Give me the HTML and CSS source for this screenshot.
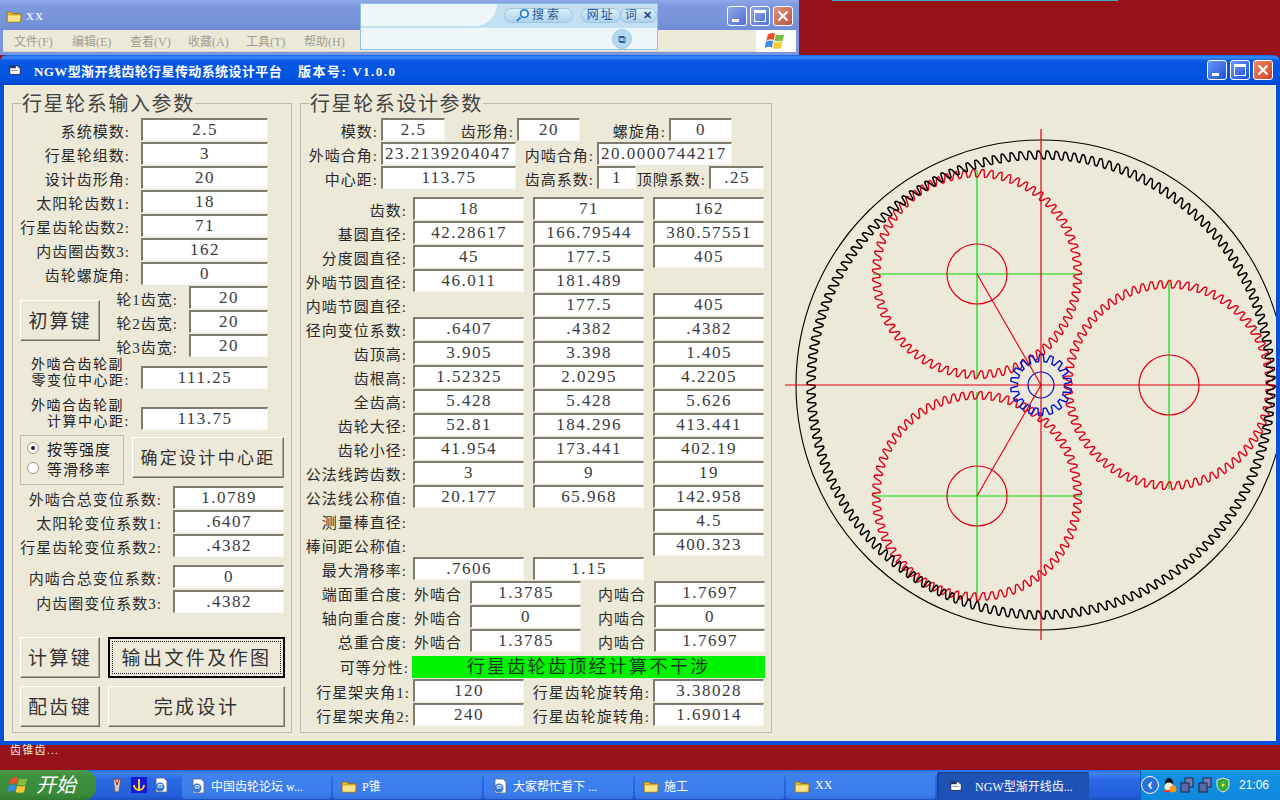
FILE: index.html
```html
<!DOCTYPE html>
<html lang="zh">
<head>
<meta charset="utf-8">
<title>NGW型渐开线齿轮行星传动系统设计平台</title>
<link rel="stylesheet" href="styles.css">
</head>
<body>
<svg class="defs" width="0" height="0">
  <symbol id="folder" viewBox="0 0 16 16"><path d="M1 4h5l1 1.500h8v8.500H1z" fill="#e8b830" stroke="#8a6a10" stroke-width=".8"/><path d="M1.500 7h13.500l-1 7H1.500z" fill="#fbe58a" stroke="#b08a20" stroke-width=".6"/></symbol>
  <symbol id="app" viewBox="0 0 16 16"><path d="M2 3h8l4 3v7H2z" fill="#fff" stroke="#223" stroke-width="1"/><rect x="2" y="3" width="7" height="3" fill="#2a3a70"/><rect x="4" y="8" width="7" height="1" fill="#889"/></symbol>
  <symbol id="ie" viewBox="0 0 16 16"><path d="M3 1h8l3 3v11H3z" fill="#fff" stroke="#667" stroke-width=".8"/><circle cx="7" cy="10" r="4.500" fill="#3a78d8"/><path d="M4.500 10h5M5 8.500a3 3 0 0 1 4.500 0" stroke="#fff" stroke-width="1.200" fill="none"/></symbol>
  <symbol id="flag" viewBox="0 0 24 24"><path d="M3 5q4-3 8-1l-1.500 7q-4-2-8 1z" fill="#e8502a"/><path d="M12 4.500q4 2 9 0l-1.500 7q-5 2-9 0z" fill="#7cc040"/><path d="M1 13q4-2.500 8-1l-1.500 7q-4-2-8 1z" fill="#3a8ae8"/><path d="M10 12.500q4 2 9 0l-1.500 7q-5 2-9 0z" fill="#f8c830"/></symbol>
</svg>

<div class="top">
  <div class="bgwin">
    <div class="bgtitle">
      <svg class="ico16"><use href="#folder"/></svg>
      <span class="bgname">XX</span>
      <div class="caps">
        <span class="cap in"><i class="min"></i></span>
        <span class="cap in"><i class="max"></i></span>
        <span class="cap inx"><svg viewBox="0 0 20 20"><path d="M5 5l10 10M15 5L5 15" stroke="#fff" stroke-width="2.400"/></svg></span>
      </div>
    </div>
    <div class="bgmenu">
      <div class="menus"><span>文件(F)</span><span>编辑(E)</span><span>查看(V)</span><span>收藏(A)</span><span>工具(T)</span><span>帮助(H)</span></div>
      <div class="logo"><svg width="22" height="22"><use href="#flag"/></svg></div>
    </div>
    <div class="iebar">
      <div class="ierow">
        <div class="ietab"></div>
        <span class="pill"><svg class="mag" viewBox="0 0 16 16"><circle cx="10" cy="6" r="4" fill="#dff" stroke="#2a80d0" stroke-width="2"/><path d="M6 10l-4 4" stroke="#2a80d0" stroke-width="2"/></svg>搜索</span>
        <span class="pill p2">网址</span>
        <span class="pill p3">词<b>✕</b></span>
      </div>
      <div class="iebox"><span class="roundb">⧉</span></div>
    </div>
  </div>
  <div class="strip"></div>
</div>

<div class="mainwin">
  <div class="title">
    <svg class="ico14"><use href="#app"/></svg>
    <span class="tname">NGW型渐开线齿轮行星传动系统设计平台</span>
    <span class="tver">版本号: V1.0.0</span>
    <div class="caps main">
      <span class="cap ac"><i class="min"></i></span>
      <span class="cap ac"><i class="max"></i></span>
      <span class="cap acx"><svg viewBox="0 0 20 20"><path d="M5 5l10 10M15 5L5 15" stroke="#fff" stroke-width="2.400"/></svg></span>
    </div>
  </div>
  <div class="client">
    <fieldset class="grp gl">
      <legend>行星轮系输入参数</legend>
      <div class="row"><span class="lb w128">系统模数:</span><span class="bx w127">2.5</span></div>
      <div class="row"><span class="lb w128">行星轮组数:</span><span class="bx w127">3</span></div>
      <div class="row"><span class="lb w128">设计齿形角:</span><span class="bx w127">20</span></div>
      <div class="row"><span class="lb w128">太阳轮齿数1:</span><span class="bx w127">18</span></div>
      <div class="row"><span class="lb w128">行星齿轮齿数2:</span><span class="bx w127">71</span></div>
      <div class="row"><span class="lb w128">内齿圈齿数3:</span><span class="bx w127">162</span></div>
      <div class="row"><span class="lb w128">齿轮螺旋角:</span><span class="bx w127">0</span></div>
      <div class="split">
        <button class="btn b80 h41 first">初算键</button>
        <div>
          <div class="row"><span class="lb w89">轮1齿宽:</span><span class="bx w79">20</span></div>
          <div class="row"><span class="lb w89">轮2齿宽:</span><span class="bx w79">20</span></div>
          <div class="row"><span class="lb w89">轮3齿宽:</span><span class="bx w79">20</span></div>
        </div>
      </div>
      <div class="row two r31"><span class="lb2"><span class="line1">外啮合齿轮副</span><br>零变位中心距:</span><span class="bx w127">111.25</span></div>
      <div class="row two r41"><span class="lb2"><span class="line1">外啮合齿轮副</span><br>计算中心距:</span><span class="bx w127">113.75</span></div>
      <div class="choice">
        <div class="radios">
          <label class="rd"><i class="dot on"></i>按等强度</label>
          <label class="rd"><i class="dot"></i>等滑移率</label>
        </div>
        <button class="btn cd">确定设计中心距</button>
      </div>
      <div class="row"><span class="lb w160">外啮合总变位系数:</span><span class="bx w111">1.0789</span></div>
      <div class="row"><span class="lb w160">太阳轮变位系数1:</span><span class="bx w111">.6407</span></div>
      <div class="row"><span class="lb w160">行星齿轮变位系数2:</span><span class="bx w111">.4382</span></div>
      <div class="row mt7"><span class="lb w160">内啮合总变位系数:</span><span class="bx w111">0</span></div>
      <div class="row mt1"><span class="lb w160">内齿圈变位系数3:</span><span class="bx w111">.4382</span></div>
      <div class="btnrow mt23">
        <button class="btn b80 big">计算键</button>
        <button class="btn b177 big focus"><span>输出文件及作图</span></button>
      </div>
      <div class="btnrow mt8">
        <button class="btn b80 big">配齿键</button>
        <button class="btn b177 big">完成设计</button>
      </div>
    </fieldset>

    <fieldset class="grp gr">
      <legend>行星轮系设计参数</legend>
      <div class="row rr"><span class="lb w80">模数:</span><span class="bx w64">2.5</span><span class="lb w72">齿形角:</span><span class="bx w63">20</span><span class="lb w89r">螺旋角:</span><span class="bx w63">0</span></div>
      <div class="row rr"><span class="lb w80">外啮合角:</span><span class="bx w135 left">23.2139204047</span><span class="lb w81">内啮合角:</span><span class="bx w135 left">20.0000744217</span></div>
      <div class="row rr"><span class="lb w80">中心距:</span><span class="bx w135">113.75</span><span class="lb w81">齿高系数:</span><span class="bx w39">1</span><span class="lb w73">顶隙系数:</span><span class="bx w55">.25</span></div>
      <div class="table">
        <span class="lb">齿数:</span><span class="bx">18</span><span class="bx">71</span><span class="bx">162</span>
        <span class="lb">基圆直径:</span><span class="bx">42.28617</span><span class="bx">166.79544</span><span class="bx">380.57551</span>
        <span class="lb">分度圆直径:</span><span class="bx">45</span><span class="bx">177.5</span><span class="bx">405</span>
        <span class="lb">外啮节圆直径:</span><span class="bx">46.011</span><span class="bx">181.489</span><span class="none"></span>
        <span class="lb">内啮节圆直径:</span><span class="none"></span><span class="bx">177.5</span><span class="bx">405</span>
        <span class="lb">径向变位系数:</span><span class="bx">.6407</span><span class="bx">.4382</span><span class="bx">.4382</span>
        <span class="lb">齿顶高:</span><span class="bx">3.905</span><span class="bx">3.398</span><span class="bx">1.405</span>
        <span class="lb">齿根高:</span><span class="bx">1.52325</span><span class="bx">2.0295</span><span class="bx">4.2205</span>
        <span class="lb">全齿高:</span><span class="bx">5.428</span><span class="bx">5.428</span><span class="bx">5.626</span>
        <span class="lb">齿轮大径:</span><span class="bx">52.81</span><span class="bx">184.296</span><span class="bx">413.441</span>
        <span class="lb">齿轮小径:</span><span class="bx">41.954</span><span class="bx">173.441</span><span class="bx">402.19</span>
        <span class="lb">公法线跨齿数:</span><span class="bx">3</span><span class="bx">9</span><span class="bx">19</span>
        <span class="lb">公法线公称值:</span><span class="bx">20.177</span><span class="bx">65.968</span><span class="bx">142.958</span>
        <span class="lb">测量棒直径:</span><span class="none"></span><span class="none"></span><span class="bx">4.5</span>
        <span class="lb">棒间距公称值:</span><span class="none"></span><span class="none"></span><span class="bx">400.323</span>
        <span class="lb">最大滑移率:</span><span class="bx">.7606</span><span class="bx">1.15</span><span class="none"></span>
      </div>
      <div class="row rr"><span class="lb w109">端面重合度:</span><span class="lb w60">外啮合</span><span class="bx w111">1.3785</span><span class="lb w73m">内啮合</span><span class="bx w111">1.7697</span></div>
      <div class="row rr"><span class="lb w109">轴向重合度:</span><span class="lb w60">外啮合</span><span class="bx w111">0</span><span class="lb w73m">内啮合</span><span class="bx w111">0</span></div>
      <div class="row rr"><span class="lb w109">总重合度:</span><span class="lb w60">外啮合</span><span class="bx w111">1.3785</span><span class="lb w73m">内啮合</span><span class="bx w111">1.7697</span></div>
      <div class="greenrow"><span class="lb w111l">可等分性:</span><span class="green">行星齿轮齿顶经计算不干涉</span></div>
      <div class="row rr"><span class="lb w112">行星架夹角1:</span><span class="bx w111">120</span><span class="lb w129">行星齿轮旋转角:</span><span class="bx w111">3.38028</span></div>
      <div class="row rr"><span class="lb w112">行星架夹角2:</span><span class="bx w111">240</span><span class="lb w129">行星齿轮旋转角:</span><span class="bx w111">1.69014</span></div>
    </fieldset>

    <svg class="draw" viewBox="776 85 500 656" width="500" height="656">
      <circle cx="1041" cy="385" r="245" class="thin-k"/>
      <g class="gr-green">
        <path d="M873 274H1081M977 170V378M873 496H1081M977 392V600M1169 281V489"/>
      </g>
      <path id="p1" class="r"/>
      <path id="p2" class="r"/>
      <path id="p3" class="r"/>
      <path id="ring" class="k"/>
      <g class="thin-r">
        <circle cx="977" cy="274" r="30"/>
        <circle cx="977" cy="496" r="30"/>
        <circle cx="1169" cy="385" r="30"/>
      </g>
      <path id="sun" class="b"/>
      <circle cx="1041" cy="385" r="13" class="thin-b"/>
      <path class="thin-r" d="M1041 129V640M785 385H1275M1041 385L977 274M1041 385L977 496"/>
    </svg>
  </div>
</div>

<div class="desk"><span>齿锥齿...</span></div>

<div class="task">
  <div class="start"><svg width="22" height="22"><use href="#flag"/></svg><em>开始</em></div>
  <div class="quick">
    <svg viewBox="0 0 16 16" width="16" height="16"><path d="M4 2h8l-2 13H6z" fill="#c8c8d0" stroke="#556"/><path d="M6 2l2 6 2-6" stroke="#c03020" fill="none"/></svg>
    <svg viewBox="0 0 16 16" width="16" height="16"><rect width="16" height="16" fill="#1818d8"/><path d="M8 2v12M3 8a5 5 0 0 0 10 0" stroke="#f8d020" stroke-width="2" fill="none"/></svg>
    <svg viewBox="0 0 16 16" width="16" height="16"><use href="#ie"/></svg>
  </div>
  <div class="tbtn t149"><svg class="ico16"><use href="#ie"/></svg>中国齿轮论坛 w...</div>
  <div class="tbtn t149"><svg class="ico16"><use href="#folder"/></svg>P锥</div>
  <div class="tbtn t149"><svg class="ico16"><use href="#ie"/></svg>大家帮忙看下 ...</div>
  <div class="tbtn t149"><svg class="ico16"><use href="#folder"/></svg>施工</div>
  <div class="tbtn t149"><svg class="ico16"><use href="#folder"/></svg>XX</div>
  <div class="tbtn act"><svg class="ico14"><use href="#app"/></svg>NGW型渐开线齿...</div>
  <div class="tray">
    <span class="back">‹</span>
    <svg viewBox="0 0 16 16" width="16" height="16"><ellipse cx="8" cy="6" rx="4" ry="5" fill="#111"/><ellipse cx="8" cy="10" rx="4.500" ry="4.500" fill="#f8f0d8"/><path d="M3 14h10" stroke="#e84020" stroke-width="2"/><circle cx="12" cy="12" r="3.500" fill="#f89820"/></svg>
    <svg viewBox="0 0 16 16" width="16" height="16"><rect x="6" y="1" width="8" height="9" fill="#7080b8" stroke="#224"/><rect x="2" y="6" width="8" height="9" fill="#5868a8" stroke="#224"/></svg>
    <svg viewBox="0 0 16 16" width="16" height="16"><rect x="6" y="1" width="8" height="9" fill="#7080b8" stroke="#224"/><rect x="2" y="6" width="8" height="9" fill="#5868a8" stroke="#224"/></svg>
    <svg viewBox="0 0 16 16" width="16" height="16"><path d="M8 1l6 2v5q0 5-6 7-6-2-6-7V3z" fill="#38a838" stroke="#e8f0e0"/><path d="M9 4L6 9h2l-1 3 3-5H8z" fill="#f8e840"/></svg>
    <span class="clock">21:06</span>
  </div>
</div>
<script src="script.js"></script>
</body>
</html>
```
FILE: styles.css
```css
* { box-sizing: border-box; }
html, body { margin: 0; padding: 0; }
body {
  width: 1280px; height: 800px; overflow: hidden;
  display: flex; flex-direction: column;
  background: #98121a;
  font-family: "Liberation Serif", "Noto Sans CJK SC", serif;
  color: #222;
}
.defs { position: absolute; }
.ico16 { width: 16px; height: 16px; flex: none; }
.ico14 { width: 14px; height: 14px; flex: none; }

/* back window */
.top { height: 55px; display: flex; flex: none; align-items: flex-start; }
.bgwin { position: relative; width: 799px; height: 55px; background: #7b96dc; border-radius: 6px 6px 0 0; padding: 0 3px 3px; display: flex; flex-direction: column; }
.strip { width: 286px; height: 1px; margin-left: 33px; background: #45a8d0; }
.bgtitle { height: 30px; display: flex; align-items: center; background: linear-gradient(#8ea8e8, #7d98de 20%, #7692da 80%, #6e8ad4); margin: 0 -3px; padding: 2px 6px 0; }
.bgname { margin-left: 4px; color: #fff; font: bold 11px "Liberation Serif", serif; letter-spacing: 1px; opacity: .85; }
.caps { margin-left: auto; display: flex; gap: 3px; }
.caps.main { margin-right: 3px; }
.cap { width: 20px; height: 20px; border: 1px solid #fff; border-radius: 3px; position: relative; display: block; }
.cap svg { width: 18px; height: 18px; display: block; }
.cap.in { background: linear-gradient(135deg, #8fa8ea, #4f6fd0); }
.cap.inx { background: linear-gradient(135deg, #e09080, #b8563e); }
.cap.ac { background: linear-gradient(135deg, #6a98f8, #1f52d8); }
.cap.acx { background: linear-gradient(135deg, #ea8a66, #cf4424); }
.cap .min { position: absolute; left: 4px; bottom: 3px; width: 7px; height: 3px; background: #fff; }
.cap .max { position: absolute; left: 3px; top: 3px; width: 12px; height: 12px; border: 1px solid #fff; border-top-width: 3px; }
.bgmenu { height: 22px; display: flex; align-items: center; background: #ece9d8; border-bottom: 1px solid #d8d4c0; }
.menus { display: flex; gap: 0; padding-left: 11px; }
.menus span { width: 58px; color: #a09e94; font-size: 12px; white-space: nowrap; }
.logo { margin-left: auto; width: 40px; height: 22px; background: #fff; display: flex; align-items: center; justify-content: center; }

/* floating toolbar */
.iebar { position: absolute; left: 360px; top: 3px; width: 298px; height: 47px; background: #c2e0f2; border: 1px solid #8cc4e6; display: flex; flex-direction: column; }
.ierow { height: 22px; display: flex; align-items: center; }
.ietab { width: 138px; height: 22px; background: #f0f7fb; border-radius: 0 0 24px 0; margin-right: 7px; }
.pill { height: 15px; border: 1px solid #98c6e6; border-radius: 8px; background: linear-gradient(#dcedf8, #aed3ec); font-size: 12px; line-height: 13px; color: #2a5a9a; letter-spacing: 3px; display: flex; align-items: center; justify-content: center; white-space: nowrap; }
.pill { width: 70px; }
.pill.p2 { width: 40px; margin-left: 8px; letter-spacing: 2px; }
.pill.p3 { width: 38px; margin-left: -1px; letter-spacing: 0; gap: 6px; }
.pill b { color: #1a4a8a; font-size: 11px; }
.mag { width: 15px; height: 15px; margin-right: 2px; }
.iebox { margin: 1px 0 0 0; flex: 1; background: #eef6fa; border-top: 1px solid #c8e2f0; display: flex; align-items: center; padding-left: 251px; }
.roundb { width: 20px; height: 20px; border-radius: 50%; background: #b4d8ee; border: 1px solid #9cc8e6; color: #2a5a9a; font-size: 11px; line-height: 18px; text-align: center; }

/* main window */
.mainwin { flex: none; height: 690px; background: #0a4fd8; border-radius: 7px 7px 0 0; display: flex; flex-direction: column; padding: 0 4px 4px; }
.title { height: 30px; flex: none; margin: 0 -4px; padding: 0 4px 0 8px; display: flex; align-items: center; color: #fff; background: linear-gradient(#0a5fe8, #3a8df8 7%, #0a58e4 20%, #0053df 85%, #0046c4); border-radius: 7px 7px 0 0; }
.tname { margin-left: 12px; font-size: 13px; font-weight: bold; letter-spacing: .4px; white-space: nowrap; }
.tver { margin-left: 16px; font-size: 13px; font-weight: bold; letter-spacing: 1.500px; white-space: nowrap; }
.client { flex: 1; background: #ece9d8; padding: 4px 0 0 8px; display: flex; gap: 8px; overflow: hidden; }
.draw { flex: none; margin-left: -4px; margin-top: -4px; }
.k { fill: none; stroke: #000; stroke-width: 1.500; }
.r { fill: none; stroke: #e40018; stroke-width: 1.400; }
.b { fill: none; stroke: #0014d0; stroke-width: 1.400; }
.thin-k { fill: none; stroke: #000; stroke-width: 1.100; }
.thin-r { fill: none; stroke: #e40018; stroke-width: 1.200; }
.thin-b { fill: none; stroke: #0014d0; stroke-width: 1.200; }
.gr-green { fill: none; stroke: #00e000; stroke-width: 1.200; }

/* groups */
.grp { margin: 0; padding: 1px 0 0; border: 1px solid #c0bcaa; min-width: 0; flex: none; height: 644px; }
.gl { width: 280px; }
.gr { width: 472px; }
.grp legend { margin-left: 9px; padding: 0; font-size: 20px; line-height: 30px; height: 28px; letter-spacing: 1.600px; color: #444; }

.row { display: flex; height: 24px; align-items: flex-start; }
.lb { font-size: 15px; line-height: 29px; height: 24px; text-align: right; padding-right: 11px; letter-spacing: 1px; white-space: nowrap; flex: none; color: #2a2a2a; }
.bx { background: #fff; height: 23px; border: solid #f6f5ee; border-width: 0 1px 1px 0; border-top: 2px solid #7e7c70; border-left: 2px solid #7e7c70; font-size: 17px; line-height: 19px; text-align: center; letter-spacing: 1.500px; color: #3a3a3a; white-space: nowrap; flex: none; overflow: hidden; }
.bx.left { text-align: left; padding-left: 2px; }
.rr .lb, .table .lb { padding-right: 3px; }

.w128 { width: 128px; }
.w127 { width: 127px; }
.w89 { width: 89px; }
.w79 { width: 79px; }
.w160 { width: 160px; }
.w111 { width: 111px; }
.w80 { width: 80px; }
.w64 { width: 64px; }
.w72 { width: 72px; }
.w63 { width: 63px; }
.w89r { width: 89px; }
.w135 { width: 135px; }
.w81 { width: 81px; }
.w39 { width: 39px; }
.w73 { width: 73px; }
.w55 { width: 55px; }
.w109 { width: 109px; }
.rr .w60 { width: 60px; padding-right: 8px; }
.rr .w73m { width: 73px; padding-right: 8px; }
.w112 { width: 112px; }
.w111l { width: 111px; }
.w129 { width: 129px; }

.split { display: flex; }
.first { margin: 14px 0 0 7px; }
.two { align-items: flex-end; }
.r31 { height: 31px; }
.r41 { height: 41px; }
.lb2 { width: 128px; flex: none; font-size: 14px; line-height: 16px; letter-spacing: 1.500px; text-align: right; padding-right: 11px; white-space: nowrap; }
.line1 { padding-right: 6px; }

.btn { background: #ece9d8; border: 1px solid; border-color: #fff #716f64 #716f64 #fff; box-shadow: inset -1px -1px 0 #aca899; font-family: inherit; color: #333; padding: 0 0 3px; white-space: nowrap; display: flex; align-items: center; justify-content: center; flex: none; }
.b80 { width: 80px; }
.h41 { height: 41px; font-size: 19px; letter-spacing: 2px; }
.big { height: 41px; font-size: 19px; letter-spacing: 2.400px; }
.b177 { width: 177px; }
.focus { border: 2px solid #000; box-shadow: none; padding: 0; }
.focus span { display: flex; align-items: center; justify-content: center; width: 169px; height: 33px; border: 1px dotted #222; padding-bottom: 3px; }

.choice { display: flex; height: 56px; padding: 5px 0 0 7px; align-items: flex-start; }
.radios { width: 104px; height: 50px; border: 1px solid #c0bcaa; padding: 2px 0 0 6px; margin-right: 8px; flex: none; }
.rd { display: flex; align-items: center; height: 20px; font-size: 15px; letter-spacing: 1px; }
.dot { width: 12px; height: 12px; border-radius: 50%; background: #fff; border: 1px solid #9a9888; margin-right: 8px; position: relative; flex: none; }
.dot.on::after { content: ""; position: absolute; left: 3px; top: 3px; width: 4px; height: 4px; border-radius: 50%; background: #222; }
.cd { width: 152px; height: 41px; font-size: 17px; letter-spacing: 2.300px; margin-top: 2px; }
.mt7 { margin-top: 7px; }
.mt1 { margin-top: 1px; }
.mt23 { margin-top: 23px; }
.mt8 { margin-top: 8px; }
.btnrow { display: flex; gap: 8px; padding-left: 7px; }

.table { display: grid; grid-template-columns: 103px 111px 111px 111px; grid-auto-rows: 24px; column-gap: 9px; margin-top: 7px; }
.table .lb { margin-right: -3px; padding-right: 0; }
.greenrow { display: flex; margin-top: 3px; height: 22px; align-items: center; margin-bottom: 1px; }
.green { width: 353px; height: 22px; background: #00f400; font-size: 18px; line-height: 22px; text-align: center; letter-spacing: 2.300px; color: #14381a; }
.greenrow .lb { padding-right: 3px; height: 22px; line-height: 25px; }

/* desktop and taskbar */
.desk { height: 25px; flex: none; padding-left: 10px; }
.desk span { color: #f4eee8; font-size: 11px; line-height: 11px; letter-spacing: 1.300px; display: block; }
.task { height: 30px; flex: none; display: flex; align-items: flex-end; background: linear-gradient(#2a66e0, #3d86f0 10%, #2a68e4 30%, #2460dc 85%, #1c50c0); }
.start { width: 96px; height: 30px; display: flex; align-items: center; padding-left: 8px; gap: 6px; background: linear-gradient(#4c9a4c, #3d913d 20%, #3a8a3a 80%, #2f7a30); border-radius: 0 12px 12px 0; color: #fff; flex: none; }
.start em { font-size: 20px; line-height: 26px; }
.quick { width: 86px; flex: none; height: 30px; display: flex; align-items: center; gap: 6px; padding-left: 13px; }
.tbtn { height: 27px; margin-bottom: 1px; margin-right: 2px; display: flex; align-items: center; gap: 5px; padding-left: 8px; color: #fff; font-size: 12px; white-space: nowrap; background: linear-gradient(#3f82f0, #3b7cec 80%, #346fde); border-radius: 3px; flex: none; }
.t149 { width: 149px; }
.act { width: 152px; padding-left: 12px; gap: 12px; background: #1e52b7; box-shadow: inset 1px 1px 2px #14388a; }
.tray { margin-left: auto; width: 140px; height: 30px; display: flex; align-items: center; gap: 2px; background: linear-gradient(#1ca0ea, #1290e4 20%, #0f88dc); border-left: 1px solid #0c5cc0; color: #fff; flex: none; }
.back { width: 18px; height: 18px; border-radius: 50%; background: #2b6fd8; border: 1px solid #fff; line-height: 15px; text-align: center; font-size: 18px; font-weight: bold; flex: none; }
.clock { font-size: 12px; margin-left: 6px; font-family: "Liberation Sans", sans-serif; }
```
FILE: script.js
```js
function gearPath(cx, cy, teeth, rRoot, rTip, phase, sharp, skew) {
  var pts = [], steps = 12;
  for (var i = 0; i < teeth; i++) {
    for (var j = 0; j < steps; j++) {
      var t = j / steps;
      var p = 0.5 + sharp * Math.sin(2 * Math.PI * t);
      p = Math.max(0, Math.min(1, p));
      var r = rRoot + (rTip - rRoot) * p;
      var u = t + skew * Math.sin(2 * Math.PI * t);
      var a = phase + 2 * Math.PI * (i + u) / teeth;
      pts.push((cx + r * Math.cos(a)).toFixed(2) + " " + (cy + r * Math.sin(a)).toFixed(2));
    }
  }
  return "M" + pts.join("L") + "Z";
}
var gears = {
  ring: [1041, 385, 162, 234, 226, 0.02, 0.7, 0.1],
  p1: [977, 274, 71, 97, 104.5, 0.05, 0.7, 0.1],
  p2: [977, 496, 71, 97, 104.5, 0.03, 0.7, 0.1],
  p3: [1169, 385, 71, 97, 104.5, 0.0, 0.7, 0.1],
  sun: [1041, 385, 18, 23.5, 30.5, 0.1, 1.1, 0]
};
Object.keys(gears).forEach(function (id) {
  document.getElementById(id).setAttribute("d", gearPath.apply(null, gears[id]));
});
```
